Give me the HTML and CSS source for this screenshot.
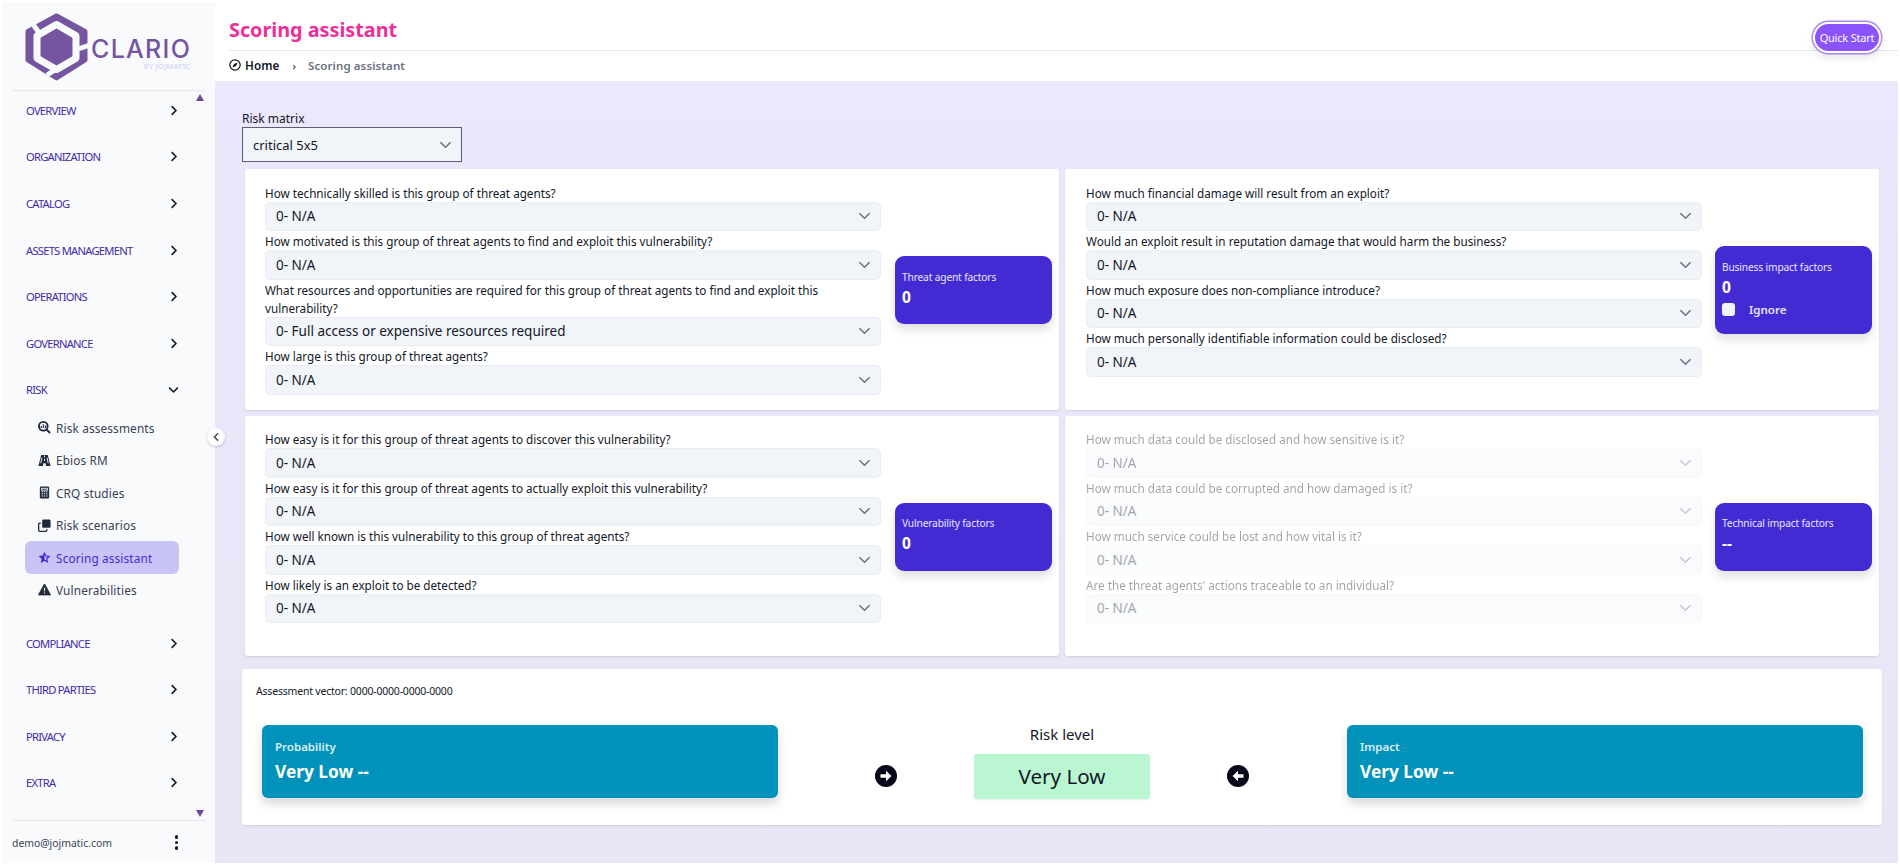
FILE: index.html
```html
<!DOCTYPE html>
<html lang="en">
<head>
  <meta charset="UTF-8" />
  <title>Scoring assistant</title>
  <link rel="stylesheet" href="styles.css">
</head>
<body>
  <div class="app">

    <!-- sidebar -->
    <aside class="sidebar">
      <div class="logo">
        <svg class="logo-mark" viewBox="0 0 64 68" width="64" height="68">
          <path d="M31.5 3 L60 18.5 V47 L31.5 65 L3 47 V18.5 Z" fill="#7655a0" stroke="#7655a0" stroke-width="5" stroke-linejoin="round"/>
          <path d="M31.5 12 L50.5 23 V45 L31.5 56 L12.5 45 V23 Z" fill="none" stroke="#f9fafc" stroke-width="8" stroke-linejoin="round"/>
          <path d="M31.5 16 L47 25 V43 L31.5 52 L16 43 V25 Z" fill="#7655a0" stroke="#7655a0" stroke-width="1" stroke-linejoin="round"/>
          <path d="M7 10 L15 21 M53 36 L65 32 M22 62 L33 55" stroke="#f9fafc" stroke-width="5" fill="none"/>
        </svg>
        <div class="logo-text">
          <div class="logo-name">CLARIO</div>
          <div class="logo-by">BY JOJMATIC</div>
        </div>
      </div>

      <nav class="nav">
        <span class="scroll-arrow scroll-up"></span>
        <a class="nav-item">OVERVIEW <svg class="chev" viewBox="0 0 10 14"><path d="M2 1.5 L7.5 7 L2 12.5"/></svg></a>
        <a class="nav-item">ORGANIZATION <svg class="chev" viewBox="0 0 10 14"><path d="M2 1.5 L7.5 7 L2 12.5"/></svg></a>
        <a class="nav-item">CATALOG <svg class="chev" viewBox="0 0 10 14"><path d="M2 1.5 L7.5 7 L2 12.5"/></svg></a>
        <a class="nav-item">ASSETS MANAGEMENT <svg class="chev" viewBox="0 0 10 14"><path d="M2 1.5 L7.5 7 L2 12.5"/></svg></a>
        <a class="nav-item">OPERATIONS <svg class="chev" viewBox="0 0 10 14"><path d="M2 1.5 L7.5 7 L2 12.5"/></svg></a>
        <a class="nav-item">GOVERNANCE <svg class="chev" viewBox="0 0 10 14"><path d="M2 1.5 L7.5 7 L2 12.5"/></svg></a>
        <a class="nav-item">RISK <svg class="chev chev-open" viewBox="0 0 14 10"><path d="M1.5 2 L7 7.5 L12.5 2"/></svg></a>

        <div class="subnav">
          <a class="sub-item">
            <svg class="sub-icon" viewBox="0 0 14 14"><circle cx="5.7" cy="5.7" r="4.7" fill="none" stroke="currentColor" stroke-width="2"/><path d="M3.5 7.5 V5.5 M5.7 7.5 V3.5 M8 7.5 V4.8" stroke="currentColor" stroke-width="1.2"/><path d="M9 9 L13 13" stroke="currentColor" stroke-width="2.2"/></svg>
            Risk assessments
          </a>
          <a class="sub-item">
            <svg class="sub-icon" viewBox="0 0 14 14"><path d="M3.5 1 H10.5 L13.5 13 H8.6 L8.2 10 H5.8 L5.4 13 H.5 Z" fill="currentColor"/><path d="M7 1.5 V3.5 M7 5 V7.5 M4.2 4 L3 10 M9.8 4 L11 10" stroke="#f9fafc" stroke-width="1"/></svg>
            Ebios RM
          </a>
          <a class="sub-item">
            <svg class="sub-icon" viewBox="0 0 14 14"><rect x="2" y="0.5" width="10" height="13" rx="1.5" fill="currentColor"/><path d="M3.8 2.5 H10.2 V4.5 H3.8 Z M3.8 6.2 H5.4 M6.2 6.2 H7.8 M8.6 6.2 H10.2 M3.8 8.4 H5.4 M6.2 8.4 H7.8 M8.6 8.4 H10.2 M3.8 10.8 H5.4 M6.2 10.8 H7.8 M8.6 10.8 H10.2" stroke="#f9fafc" stroke-width="1" fill="none"/></svg>
            CRQ studies
          </a>
          <a class="sub-item">
            <svg class="sub-icon" viewBox="0 0 14 14"><rect x="4.5" y="0.5" width="9" height="9" rx="1.5" fill="currentColor"/><path d="M3 4.5 H1.8 Q.7 4.5 .7 5.6 V12.2 Q.7 13.3 1.8 13.3 H8.4 Q9.5 13.3 9.5 12.2 V11" fill="none" stroke="currentColor" stroke-width="1.4"/></svg>
            Risk scenarios
          </a>
          <a class="sub-item sub-active">
            <svg class="sub-icon" viewBox="0 0 14 14"><path d="M7 .8 L8.9 4.9 L13.4 5.4 L10.1 8.5 L11 13 L7 10.8 L3 13 L3.9 8.5 L.6 5.4 L5.1 4.9 Z" fill="currentColor"/><path d="M7 3.8 V9.2 L9.3 10.5 L8.8 7.8 L10.6 6.2 L8 5.9 Z" fill="#c8c5f6"/></svg>
            Scoring assistant
          </a>
          <a class="sub-item">
            <svg class="sub-icon" viewBox="0 0 14 14"><path d="M7 1 L13.5 12.8 H.5 Z" fill="currentColor" stroke="currentColor" stroke-linejoin="round"/><path d="M7 5 V9 M7 10.2 V11.4" stroke="#f9fafc" stroke-width="1.3"/></svg>
            Vulnerabilities
          </a>
        </div>

        <a class="nav-item">COMPLIANCE <svg class="chev" viewBox="0 0 10 14"><path d="M2 1.5 L7.5 7 L2 12.5"/></svg></a>
        <a class="nav-item">THIRD PARTIES <svg class="chev" viewBox="0 0 10 14"><path d="M2 1.5 L7.5 7 L2 12.5"/></svg></a>
        <a class="nav-item">PRIVACY <svg class="chev" viewBox="0 0 10 14"><path d="M2 1.5 L7.5 7 L2 12.5"/></svg></a>
        <a class="nav-item">EXTRA <svg class="chev" viewBox="0 0 10 14"><path d="M2 1.5 L7.5 7 L2 12.5"/></svg></a>
        <span class="scroll-arrow scroll-down"></span>
      </nav>

      <div class="user">
        <span>demo@jojmatic.com</span>
        <span class="dots"><i></i><i></i><i></i></span>
      </div>

      <button class="collapse">
        <svg viewBox="0 0 10 12" width="8" height="10"><path d="M7.5 1.5 L3 6 L7.5 10.5" fill="none" stroke="#4b5563" stroke-width="2"/></svg>
      </button>
    </aside>

    <!-- main -->
    <main class="main">
      <header class="header">
        <h1 class="title">Scoring assistant</h1>
        <div class="crumbs">
          <svg class="compass" viewBox="0 0 12 12"><circle cx="6" cy="6" r="5.2" fill="none" stroke="#111" stroke-width="1.2"/><path d="M8.6 3.4 L7 7 L3.4 8.6 L5 5 Z" fill="#111"/></svg>
          <b>Home</b>
          <span class="crumb-sep">›</span>
          <span class="crumb-now">Scoring assistant</span>
        </div>
        <button class="quick">Quick Start</button>
      </header>

      <div class="content">
        <label class="matrix-label">Risk matrix</label>
        <div class="matrix-select">
          critical 5x5
          <svg class="sel-chev" viewBox="0 0 14 8"><path d="M1.5 1 L7 6.5 L12.5 1"/></svg>
        </div>

        <div class="cards">
          <section class="card">
            <div class="questions">
              <label>How technically skilled is this group of threat agents?</label>
              <div class="select">0- N/A <svg class="sel-chev" viewBox="0 0 14 8"><path d="M1.5 1 L7 6.5 L12.5 1"/></svg></div>
              <label>How motivated is this group of threat agents to find and exploit this vulnerability?</label>
              <div class="select">0- N/A <svg class="sel-chev" viewBox="0 0 14 8"><path d="M1.5 1 L7 6.5 L12.5 1"/></svg></div>
              <label>What resources and opportunities are required for this group of threat agents to find and exploit this vulnerability?</label>
              <div class="select">0- Full access or expensive resources required <svg class="sel-chev" viewBox="0 0 14 8"><path d="M1.5 1 L7 6.5 L12.5 1"/></svg></div>
              <label>How large is this group of threat agents?</label>
              <div class="select">0- N/A <svg class="sel-chev" viewBox="0 0 14 8"><path d="M1.5 1 L7 6.5 L12.5 1"/></svg></div>
            </div>
            <div class="factor">
              <div class="factor-name">Threat agent factors</div>
              <div class="factor-value">0</div>
            </div>
          </section>

          <section class="card">
            <div class="questions">
              <label>How much financial damage will result from an exploit?</label>
              <div class="select">0- N/A <svg class="sel-chev" viewBox="0 0 14 8"><path d="M1.5 1 L7 6.5 L12.5 1"/></svg></div>
              <label>Would an exploit result in reputation damage that would harm the business?</label>
              <div class="select">0- N/A <svg class="sel-chev" viewBox="0 0 14 8"><path d="M1.5 1 L7 6.5 L12.5 1"/></svg></div>
              <label>How much exposure does non-compliance introduce?</label>
              <div class="select">0- N/A <svg class="sel-chev" viewBox="0 0 14 8"><path d="M1.5 1 L7 6.5 L12.5 1"/></svg></div>
              <label>How much personally identifiable information could be disclosed?</label>
              <div class="select">0- N/A <svg class="sel-chev" viewBox="0 0 14 8"><path d="M1.5 1 L7 6.5 L12.5 1"/></svg></div>
            </div>
            <div class="factor">
              <div class="factor-name">Business impact factors</div>
              <div class="factor-value">0</div>
              <div class="ignore"><span class="check"></span>Ignore</div>
            </div>
          </section>

          <section class="card">
            <div class="questions">
              <label>How easy is it for this group of threat agents to discover this vulnerability?</label>
              <div class="select">0- N/A <svg class="sel-chev" viewBox="0 0 14 8"><path d="M1.5 1 L7 6.5 L12.5 1"/></svg></div>
              <label>How easy is it for this group of threat agents to actually exploit this vulnerability?</label>
              <div class="select">0- N/A <svg class="sel-chev" viewBox="0 0 14 8"><path d="M1.5 1 L7 6.5 L12.5 1"/></svg></div>
              <label>How well known is this vulnerability to this group of threat agents?</label>
              <div class="select">0- N/A <svg class="sel-chev" viewBox="0 0 14 8"><path d="M1.5 1 L7 6.5 L12.5 1"/></svg></div>
              <label>How likely is an exploit to be detected?</label>
              <div class="select">0- N/A <svg class="sel-chev" viewBox="0 0 14 8"><path d="M1.5 1 L7 6.5 L12.5 1"/></svg></div>
            </div>
            <div class="factor">
              <div class="factor-name">Vulnerability factors</div>
              <div class="factor-value">0</div>
            </div>
          </section>

          <section class="card">
            <div class="questions disabled">
              <label>How much data could be disclosed and how sensitive is it?</label>
              <div class="select">0- N/A <svg class="sel-chev" viewBox="0 0 14 8"><path d="M1.5 1 L7 6.5 L12.5 1"/></svg></div>
              <label>How much data could be corrupted and how damaged is it?</label>
              <div class="select">0- N/A <svg class="sel-chev" viewBox="0 0 14 8"><path d="M1.5 1 L7 6.5 L12.5 1"/></svg></div>
              <label>How much service could be lost and how vital is it?</label>
              <div class="select">0- N/A <svg class="sel-chev" viewBox="0 0 14 8"><path d="M1.5 1 L7 6.5 L12.5 1"/></svg></div>
              <label>Are the threat agents' actions traceable to an individual?</label>
              <div class="select">0- N/A <svg class="sel-chev" viewBox="0 0 14 8"><path d="M1.5 1 L7 6.5 L12.5 1"/></svg></div>
            </div>
            <div class="factor">
              <div class="factor-name">Technical impact factors</div>
              <div class="factor-value">--</div>
            </div>
          </section>
        </div>

        <section class="summary">
          <div class="vector">Assessment vector: 0000-0000-0000-0000</div>
          <div class="summary-row">
            <div class="result">
              <div class="result-name">Probability</div>
              <div class="result-value">Very Low --</div>
            </div>
            <svg class="arrow" viewBox="0 0 22 22"><circle cx="11" cy="11" r="11" fill="#05061a"/><path d="M5.5 9.3 H11 V5.8 L16.5 11 L11 16.2 V12.7 H5.5 Z" fill="#fff"/></svg>
            <div class="level">
              <div class="level-name">Risk level</div>
              <div class="level-value">Very Low</div>
            </div>
            <svg class="arrow" viewBox="0 0 22 22"><circle cx="11" cy="11" r="11" fill="#05061a"/><path d="M16.5 9.3 H11 V5.8 L5.5 11 L11 16.2 V12.7 H16.5 Z" fill="#fff"/></svg>
            <div class="result">
              <div class="result-name">Impact</div>
              <div class="result-value">Very Low --</div>
            </div>
          </div>
        </section>
      </div>
    </main>
  </div>
</body>
</html>
```

FILE: styles.css
```css
:root {
  --indigo: #432bd4;
  --teal: #0092ba;
  --side: #f9fafc;
  --field: #f1f4f9;
}

* { box-sizing: border-box; }

html, body { height: 100%; }

body {
  margin: 0;
  padding: 2px;
  background: white;
  font-family: "Noto Sans", sans-serif;
  color: #111827;
  overflow: hidden;
}

.app {
  display: flex;
  height: 861px;
}

/* sidebar */
.sidebar {
  position: relative;
  width: 213px;
  flex: none;
  background: var(--side);
  padding: 0 10px;
  display: flex;
  flex-direction: column;
}
.logo {
  height: 89px;
  flex: none;
  border-bottom: 1px solid #e5e7eb;
  display: flex;
  align-items: flex-start;
  padding: 11px 0 0 13px;
}
.logo-mark { flex: none; }
.logo-text { margin: 24px 0 0 2px; }
.logo-name {
  font-family: "Inter", sans-serif;
  font-size: 25px;
  line-height: 24px;
  font-weight: 500;
  color: #7655a0;
  letter-spacing: 1.3px;
}
.logo-by {
  font-size: 7.5px;
  line-height: 8px;
  font-weight: 700;
  color: #dcdcf6;
  text-align: right;
  margin: 1px 1px 0 0;
}

.nav {
  position: relative;
  flex: 1;
  margin-top: -4px;
}
.nav-item {
  display: flex;
  align-items: center;
  justify-content: space-between;
  height: 46.6px;
  padding: 0 27px 0 14px;
  font-size: 11.2px;
  letter-spacing: -0.75px;
  color: #3f2ba8;
  white-space: nowrap;
}
.chev {
  width: 8px;
  height: 11px;
  fill: none;
  stroke: #111827;
  stroke-width: 2;
}
.chev-open { width: 11px; height: 8px; margin-right: -1px; }

.subnav {
  display: flex;
  flex-direction: column;
  padding: 0 0 0 13px;
  margin: -1.4px 0 13.6px;
}
.sub-item {
  display: flex;
  align-items: center;
  gap: 5px;
  width: 154px;
  height: 32.4px;
  padding-left: 13px;
  font-size: 11.8px;
  letter-spacing: 0.15px;
  color: #374151;
  border-radius: 6px;
}
.sub-icon {
  width: 13px;
  height: 13px;
  flex: none;
  color: #1f2937;
}
.sub-active {
  background: #c8c5f6;
  color: var(--indigo);
}
.sub-active .sub-icon { color: var(--indigo); }

.scroll-arrow {
  position: absolute;
  right: 1px;
  width: 0;
  height: 0;
  border-left: 4.5px solid transparent;
  border-right: 4.5px solid transparent;
}
.scroll-up { top: 7px; border-bottom: 7px solid #6b4a9e; }
.scroll-down { bottom: 3px; border-top: 7px solid #6b4a9e; }

.user {
  height: 43px;
  flex: none;
  border-top: 1px solid #e5e7eb;
  display: flex;
  align-items: center;
  justify-content: space-between;
  padding: 1px 27px 0 0;
  font-size: 10.4px;
  color: #374151;
}
.dots {
  display: flex;
  flex-direction: column;
  gap: 2px;
}
.dots i {
  width: 3.5px;
  height: 3.5px;
  border-radius: 50%;
  background: #111827;
}

.collapse {
  position: absolute;
  top: 426px;
  right: -10px;
  width: 18px;
  height: 18px;
  padding: 0;
  border: 0;
  border-radius: 50%;
  background: white;
  box-shadow: 0 1px 3px rgba(0, 0, 0, .2);
  display: flex;
  align-items: center;
  justify-content: center;
  z-index: 2;
}

/* main */
.main {
  flex: 1;
  display: flex;
  flex-direction: column;
  min-width: 0;
}
.header {
  position: relative;
  height: 79px;
  flex: none;
  background: white;
  padding-left: 14px;
}
.title {
  margin: 0;
  height: 49px;
  border-bottom: 1px solid #e5e7eb;
  padding-top: 14px;
  font-size: 19.8px;
  line-height: 28px;
  font-weight: 700;
  color: #ec2f9a;
}
.crumbs {
  display: flex;
  align-items: center;
  height: 28px;
  font-size: 11.7px;
  letter-spacing: 0.1px;
}
.crumbs b { font-weight: 600; color: #111827; }
.compass { width: 12px; height: 12px; margin-right: 4px; }
.crumb-sep { margin: 0 12px 0 13px; font-size: 11px; }
.crumb-now { font-weight: 600; color: #6b7280; font-size: 11.5px; }
.quick {
  position: absolute;
  top: 20px;
  right: 17px;
  width: 68px;
  height: 31px;
  padding: 0;
  border: 2px solid white;
  border-radius: 16px;
  background: #8b53fb;
  box-shadow: 0 0 0 1.5px #a98bf3, 0 4px 8px rgba(0, 0, 0, .12);
  color: white;
  font-family: "Noto Sans", sans-serif;
  font-size: 11px;
  letter-spacing: -0.2px;
}

.content {
  flex: 1;
  background: linear-gradient(to bottom, #ece7fc, #e6e6f5);
  padding: 30px 16px 0 27px;
}
.matrix-label {
  display: block;
  font-size: 12px;
  line-height: 16px;
  color: #111827;
}
.matrix-select {
  position: relative;
  width: 220px;
  height: 35px;
  padding-left: 10px;
  display: flex;
  align-items: center;
  background: var(--field);
  border: 1px solid #5b6070;
  font-size: 13px;
}

.sel-chev {
  position: absolute;
  top: 50%;
  right: 9px;
  width: 13px;
  height: 8px;
  margin-top: -4px;
  fill: none;
  stroke: #6b7280;
  stroke-width: 1.6;
}

.cards {
  display: grid;
  grid-template-columns: 814px 814px;
  grid-auto-rows: 240.5px;
  gap: 6px;
  margin: 7px 0 13px 3px;
}
.card {
  background: white;
  border-radius: 3px;
  box-shadow: 0 1px 2px rgba(0, 0, 0, .1);
  padding: 14.5px 7px 0 20px;
  display: flex;
  align-items: center;
  gap: 14px;
}
.card:nth-child(even) {
  padding-left: 21px;
  gap: 13px;
}
.questions {
  width: 616px;
  flex: none;
  align-self: flex-start;
}
.questions label {
  display: block;
  font-size: 11.7px;
  line-height: 18px;
  color: #111827;
}
.select {
  position: relative;
  height: 29.5px;
  margin-bottom: 1px;
  padding-left: 10px;
  display: flex;
  align-items: center;
  background: var(--field);
  border: 1px solid #e9ecf3;
  border-radius: 5px;
  font-size: 13.5px;
  color: #111827;
}
.disabled { opacity: .4; }

.factor {
  flex: 1;
  background: var(--indigo);
  color: white;
  border-radius: 9px;
  padding: 12.5px 7px 17.5px;
  box-shadow: 0 6px 10px rgba(0, 0, 0, .12);
  align-self: center;
  margin-top: -13px;
}
.factor-name {
  font-size: 10.2px;
  line-height: 16px;
  letter-spacing: -0.15px;
  color: #e8e6fb;
}
.factor-value {
  font-size: 15.5px;
  line-height: 20px;
  font-weight: 700;
  margin-top: 2px;
}
.ignore {
  display: flex;
  align-items: center;
  margin-top: 5px;
  font-size: 11.5px;
  font-weight: 600;
  color: #e8e6fb;
}
.check {
  width: 13px;
  height: 13px;
  margin-right: 14px;
  border-radius: 3px;
  background: #f1f4f9;
}

.summary {
  width: 1640px;
  height: 156px;
  background: white;
  border-radius: 3px;
  box-shadow: 0 1px 2px rgba(0, 0, 0, .1);
  padding: 12px 20px 0;
}
.vector {
  font-size: 10.5px;
  line-height: 20px;
  letter-spacing: -0.2px;
  margin-left: -6px;
  color: #111827;
}
.summary-row {
  display: flex;
  align-items: flex-start;
  margin-top: 24px;
}
.result {
  width: 516px;
  height: 73px;
  flex: none;
  background: var(--teal);
  color: white;
  border-radius: 6px;
  padding: 13px 13px;
  box-shadow: 0 6px 10px rgba(0, 0, 0, .15);
}
.result-name {
  font-size: 11.5px;
  line-height: 18px;
  font-weight: 600;
  color: #dbeef5;
}
.result-value {
  font-size: 17.3px;
  line-height: 31px;
  font-weight: 700;
}
.arrow {
  width: 22px;
  height: 22px;
  flex: none;
  margin-top: 40px;
}
.level {
  width: 176px;
  flex: none;
  margin: 0 77px;
  text-align: center;
}
.result:first-child + .arrow { margin-left: 97px; }
.result:last-child { margin-left: 98px; }
.level-name {
  font-size: 15px;
  line-height: 20px;
  margin-top: -1px;
  color: #111827;
}
.level-value {
  height: 45px;
  margin-top: 10px;
  background: #b9f6d1;
  border-radius: 3px;
  box-shadow: 0 1px 2px rgba(0, 0, 0, .08);
  font-size: 20.6px;
  line-height: 44px;
  color: #111827;
}
```
